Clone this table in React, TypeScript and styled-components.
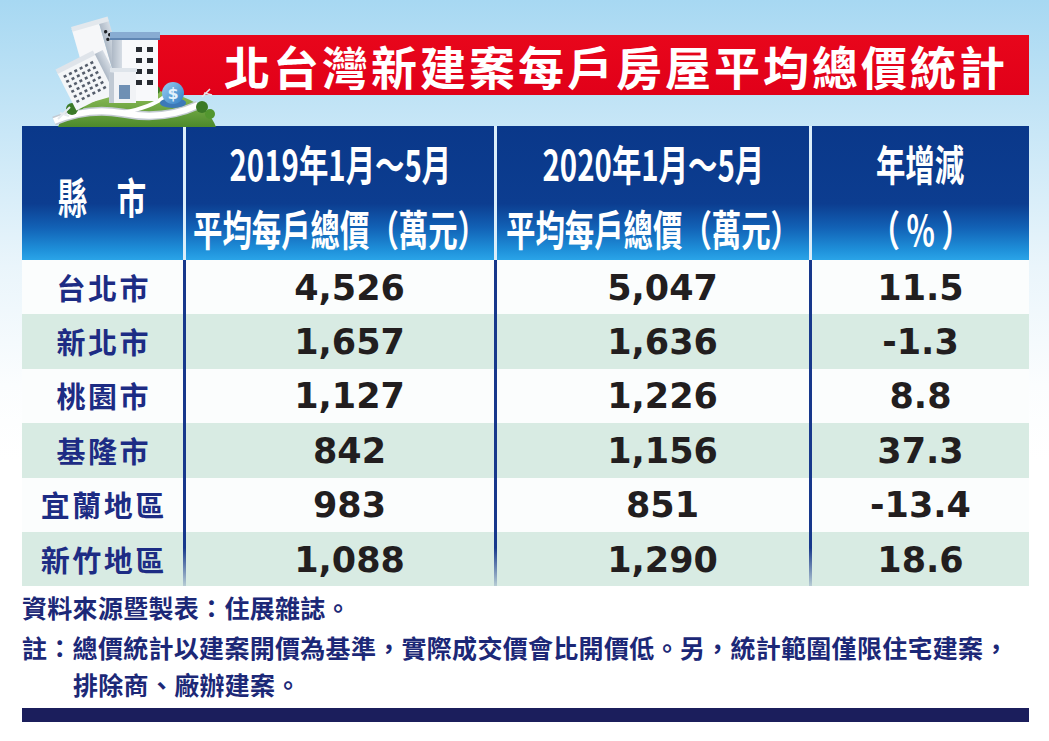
import styled, { createGlobalStyle } from 'styled-components';

const GlobalStyle = createGlobalStyle`
  html, body {
    margin: 0;
    padding: 0;
  }
  body {
    font-family: "Noto Sans CJK TC", "Noto Sans", sans-serif;
  }
`;

const CJK = `"Noto Sans CJK TC", "Noto Sans CJK SC", sans-serif`;

const ScPage = styled.div`
  width: 1049px;
  height: 741px;
  overflow: hidden;
  box-sizing: border-box;
  padding: 35px 20px 0 22px;
  background: linear-gradient(180deg, #a7d8f2 0%, #c9e7f7 18%, #eaf5fb 36%, #fbfdfe 52%, #ffffff 62%);
  display: flex;
  flex-direction: column;
`;

const ScHero = styled.div`
  position: relative;
  padding-left: 118px;
`;

const ScArt = styled.svg`
  position: absolute;
  left: 30px;
  top: -22px;
  z-index: 2;
`;

const ScTitleBar = styled.h1`
  margin: 0;
  height: 60px;
  background: linear-gradient(180deg, #e8061b 0%, #e10019 100%);
  color: #ffffff;
  font-family: ${CJK};
  font-weight: 700;
  font-size: 46px;
  letter-spacing: 3px;
  line-height: 60px;
  text-align: right;
  padding-right: 21px;
  white-space: nowrap;
`;

const ScTable = styled.div`
  margin-top: 31px;
  display: flex;
  flex-direction: column;
`;

const COLS = '161px 311px 315px 220px';

const ScHeadRow = styled.div`
  display: grid;
  grid-template-columns: ${COLS};
  height: 134px;
  background: linear-gradient(180deg, #0a388a 0%, #0c3d90 58%, #1262b6 76%, #1e8fd9 92%, #2aa4e8 100%);
`;

const ScHeadCell = styled.div<{ $first?: boolean }>`
  display: flex;
  flex-direction: column;
  align-items: center;
  justify-content: center;
  padding-top: 4px;
  border-left: ${(p) => (p.$first ? 'none' : '3px solid #dbeefa')};
  color: #ffffff;
  font-family: ${CJK};
  font-weight: 700;
  font-size: 42px;
  line-height: 65px;
  white-space: nowrap;
`;

const ScNarrow = styled.span`
  display: inline-block;
  transform: scaleX(0.7);
`;

const ScRow = styled.div<{ $alt?: boolean }>`
  display: grid;
  grid-template-columns: ${COLS};
  height: 54.4px;
  background: ${(p) => (p.$alt ? '#d8ebe3' : '#fbfdfd')};
`;

const ScCell = styled.div<{ $first?: boolean; $last?: boolean; $shift?: boolean }>`
  display: flex;
  align-items: center;
  justify-content: center;
  padding-left: ${(p) => (p.$shift ? '19px' : '0')};
  border-left: ${(p) => (p.$first ? 'none' : '3px solid #17388c')};
  ${(p) =>
    p.$last &&
    !p.$first &&
    `border-image: linear-gradient(180deg, #17388c 0%, #17388c 30%, rgba(23,56,140,0.15) 100%) 1;`}
`;

const ScCity = styled.span`
  color: #1d2c84;
  font-family: ${CJK};
  font-weight: 700;
  font-size: 29px;
  letter-spacing: 2.5px;
  margin-right: -2.5px;
  line-height: 1;
`;

const ScNum = styled.span`
  color: #221e1f;
  font-family: "DejaVu Sans", "Liberation Sans", sans-serif;
  font-weight: 700;
  font-size: 35px;
  line-height: 1;
  padding-top: 2px;
`;

const ScNotes = styled.div`
  margin-top: 3px;
  color: #1c2877;
  font-family: ${CJK};
  font-weight: 700;
  font-size: 25px;
  letter-spacing: 0.3px;
  line-height: 37px;
  white-space: nowrap;
`;

const ScNote = styled.p<{ $hang?: boolean }>`
  margin: 0;
  padding-left: ${(p) => (p.$hang ? '51px' : '0')};
  text-indent: ${(p) => (p.$hang ? '-51px' : '0')};
  & + & {
    margin-top: 3px;
  }
`;

const ScBottomBar = styled.div`
  margin-top: 5px;
  height: 14px;
  background: #1b1e5c;
`;

function Skyline() {
  const grid = (cols: number, rows: number, x: number, y: number, dx: number, dy: number, w: number, h: number, fill: string, key: string) =>
    Array.from({ length: rows }).flatMap((_, r) =>
      Array.from({ length: cols }).map((__, c) => (
        <rect key={key + r + '-' + c} x={x + c * dx} y={y + r * dy} width={w} height={h} fill={fill} />
      ))
    );

  return (
    <ScArt width="168" height="114" viewBox="0 0 168 114">
      <defs>
        <linearGradient id="hill" x1="0" y1="0" x2="0" y2="1">
          <stop offset="0" stopColor="#93c25c" />
          <stop offset="1" stopColor="#4c8a2b" />
        </linearGradient>
        <linearGradient id="ball" x1="0" y1="0" x2="1" y2="1">
          <stop offset="0" stopColor="#9ccff2" />
          <stop offset="1" stopColor="#2f7dc4" />
        </linearGradient>
        <linearGradient id="side" x1="0" y1="0" x2="1" y2="0">
          <stop offset="0" stopColor="#aeb9c6" />
          <stop offset="1" stopColor="#d6dde5" />
        </linearGradient>
      </defs>

      {/* hill */}
      <path d="M6 114 Q18 80 84 76 Q150 78 164 114 Z" fill="url(#hill)" />
      {/* road */}
      <path d="M2 108 Q36 94 70 100 Q112 108 146 92" stroke="#c3cad2" strokeWidth="9" fill="none" />
      <path d="M2 108 Q36 94 70 100 Q112 108 146 92" stroke="#ffffff" strokeWidth="6" fill="none" />
      <path d="M70 100 Q100 94 112 84" stroke="#ffffff" strokeWidth="4" fill="none" />
      {/* trees */}
      <circle cx="20" cy="96" r="6" fill="#3b7a27" />
      <circle cx="28" cy="92" r="4.5" fill="#52962f" />
      <circle cx="150" cy="94" r="6" fill="#3b7a27" />
      <circle cx="158" cy="101" r="5" fill="#52962f" />
      <circle cx="104" cy="77" r="4" fill="#3b7a27" />
      <circle cx="114" cy="80" r="3.5" fill="#52962f" />
      {/* antenna */}
      <path d="M6 106 L18 94 M8 100 L17 103" stroke="#e6eaee" strokeWidth="2" />
      <path d="M150 84 L158 76 M152 80 L160 82" stroke="#e6eaee" strokeWidth="1.6" />

      {/* tall back tower */}
      <g transform="rotate(-16 46 50)">
        <rect x="30" y="10" width="28" height="76" fill="#f6f7f9" />
        <rect x="58" y="12" width="10" height="74" fill="url(#side)" />
        <rect x="30" y="8" width="38" height="5" fill="#e3e8ed" />
        <circle cx="62" cy="22" r="1.7" fill="#1e2226" />
        <circle cx="65" cy="26" r="1.7" fill="#1e2226" />
        <circle cx="62" cy="30" r="1.7" fill="#1e2226" />
      </g>

      {/* right block */}
      <rect x="70" y="24" width="36" height="64" fill="#f8f9fb" />
      <rect x="60" y="26" width="10" height="62" fill="url(#side)" />
      <rect x="58" y="19" width="50" height="6" fill="#88acd2" />
      <rect x="58" y="25" width="50" height="2" fill="#5f86b3" />
      {grid(2, 4, 84, 34, 11, 11, 6, 5, '#272b31', 'rw')}

      {/* left tilted block */}
      <g transform="rotate(-27 34 68)">
        <rect x="12" y="48" width="42" height="42" fill="#f4f6f8" />
        <rect x="12" y="44" width="42" height="5" fill="#dfe4ea" />
        <rect x="54" y="48" width="9" height="42" fill="url(#side)" />
        {grid(6, 6, 16, 53, 6, 5.6, 3, 2.6, '#555d6b', 'lw')}
      </g>

      {/* small front block */}
      <rect x="62" y="58" width="22" height="32" fill="#f1f3f6" />
      <rect x="57" y="60" width="5" height="30" fill="#c1cad4" />
      <rect x="58" y="55" width="27" height="4" fill="#dfe5eb" />
      <rect x="67" y="72" width="11" height="14" fill="#6f90b4" />

      {/* dollar ball */}
      <ellipse cx="121" cy="90" rx="13" ry="5" fill="#3c79b8" />
      <circle cx="121" cy="80" r="11" fill="url(#ball)" />
      <text x="121" y="86" textAnchor="middle" fontSize="16" fontWeight="700" fill="#e4f2fc" fontFamily="DejaVu Sans, sans-serif">
        $
      </text>
    </ScArt>
  );
}

const rows = [
  { city: '台北市', y2019: '4,526', y2020: '5,047', diff: '11.5' },
  { city: '新北市', y2019: '1,657', y2020: '1,636', diff: '-1.3' },
  { city: '桃園市', y2019: '1,127', y2020: '1,226', diff: '8.8' },
  { city: '基隆市', y2019: '842', y2020: '1,156', diff: '37.3' },
  { city: '宜蘭地區', y2019: '983', y2020: '851', diff: '-13.4' },
  { city: '新竹地區', y2019: '1,088', y2020: '1,290', diff: '18.6' },
];

export default function App() {
  return (
    <>
      <GlobalStyle />
      <ScPage>
        <ScHero>
          <Skyline />
          <ScTitleBar>北台灣新建案每戶房屋平均總價統計</ScTitleBar>
        </ScHero>

        <ScTable>
          <ScHeadRow>
            <ScHeadCell $first>
              <ScNarrow>縣　市</ScNarrow>
            </ScHeadCell>
            <ScHeadCell>
              <ScNarrow>2019年1月～5月</ScNarrow>
              <ScNarrow>平均每戶總價（萬元）</ScNarrow>
            </ScHeadCell>
            <ScHeadCell>
              <ScNarrow>2020年1月～5月</ScNarrow>
              <ScNarrow>平均每戶總價（萬元）</ScNarrow>
            </ScHeadCell>
            <ScHeadCell>
              <ScNarrow>年增減</ScNarrow>
              <ScNarrow>（ % ）</ScNarrow>
            </ScHeadCell>
          </ScHeadRow>

          {rows.map((r, i) => {
            const last = i === rows.length - 1;
            return (
              <ScRow key={r.city} $alt={i % 2 === 1}>
                <ScCell $first>
                  <ScCity>{r.city}</ScCity>
                </ScCell>
                <ScCell $shift $last={last}>
                  <ScNum>{r.y2019}</ScNum>
                </ScCell>
                <ScCell $shift $last={last}>
                  <ScNum>{r.y2020}</ScNum>
                </ScCell>
                <ScCell $last={last}>
                  <ScNum>{r.diff}</ScNum>
                </ScCell>
              </ScRow>
            );
          })}
        </ScTable>

        <ScNotes>
          <ScNote>資料來源暨製表：住展雜誌。</ScNote>
          <ScNote $hang>
            註：總價統計以建案開價為基準，實際成交價會比開價低。另，統計範圍僅限住宅建案，
            <br />
            排除商、廠辦建案。
          </ScNote>
        </ScNotes>

        <ScBottomBar />
      </ScPage>
    </>
  );
}
